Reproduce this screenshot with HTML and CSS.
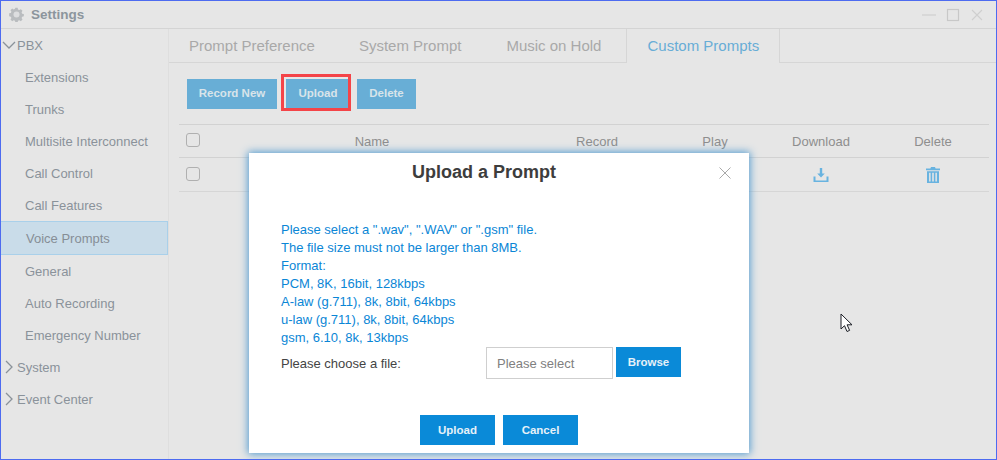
FILE: index.html
```html
<!DOCTYPE html>
<html lang="en">
<head>
  <meta charset="UTF-8" />
  <title>Settings</title>
  <link rel="stylesheet" href="styles.css">
</head>
<body>
  <div class="window">
    <header class="titlebar">
      <svg class="gear" width="15" height="15" viewBox="0 0 18 18">
        <path fill="#b9bcbf" d="M7.6 1h2.800l.4 2 1.600.7 1.800-1.100 2 2-1.100 1.800.7 1.600 2 .4v2.800l-2 .4-.7 1.600 1.100 1.800-2 2-1.800-1.100-1.600.7-.4 2H7.600l-.4-2-1.600-.7-1.800 1.100-2-2 1.100-1.800-.7-1.600-2-.4V7.600l2-.4.7-1.600-1.100-1.800 2-2 1.800 1.100 1.600-.7z"/>
        <circle cx="9" cy="9" r="3.600" fill="#dcdddf"/>
      </svg>
      <span class="app-title">Settings</span>
      <div class="win-controls">
        <svg width="16" height="16" viewBox="0 0 16 16"><path d="M1 8h14" stroke="#cfcfcf" stroke-width="1.200"/></svg>
        <svg width="16" height="16" viewBox="0 0 16 16"><rect x="2.500" y="2.500" width="11" height="11" fill="none" stroke="#c8c8c8" stroke-width="1.200"/></svg>
        <svg width="16" height="16" viewBox="0 0 16 16"><path d="M3 3l10 10M13 3L3 13" stroke="#cfcfcf" stroke-width="1.100"/></svg>
      </div>
    </header>

    <div class="main">
      <nav class="sidebar">
        <div class="nav-group">
          <svg class="chev" width="14" height="14" viewBox="0 0 14 14"><path d="M1 4l6 6 6-6" fill="none" stroke="#8a929a" stroke-width="1.300"/></svg>PBX
        </div>
        <a class="nav-item">Extensions</a>
        <a class="nav-item">Trunks</a>
        <a class="nav-item">Multisite Interconnect</a>
        <a class="nav-item">Call Control</a>
        <a class="nav-item">Call Features</a>
        <a class="nav-item active">Voice Prompts</a>
        <a class="nav-item">General</a>
        <a class="nav-item">Auto Recording</a>
        <a class="nav-item">Emergency Number</a>
        <div class="nav-group">
          <svg class="chev" width="14" height="14" viewBox="0 0 14 14"><path d="M4 1l6 6-6 6" fill="none" stroke="#8a929a" stroke-width="1.300"/></svg>System
        </div>
        <div class="nav-group">
          <svg class="chev" width="14" height="14" viewBox="0 0 14 14"><path d="M4 1l6 6-6 6" fill="none" stroke="#8a929a" stroke-width="1.300"/></svg>Event Center
        </div>
      </nav>

      <section class="content">
        <div class="tabs">
          <a class="tab">Prompt Preference</a>
          <a class="tab">System Prompt</a>
          <a class="tab">Music on Hold</a>
          <a class="tab current">Custom Prompts</a>
        </div>

        <div class="toolbar">
          <button class="btn-dim record">Record New</button>
          <span class="marked"><button class="btn-dim upload">Upload</button></span>
          <button class="btn-dim delete">Delete</button>
        </div>

        <div class="table">
          <div class="row head">
            <span class="check-cell"><i class="check"></i></span>
            <span>Name</span>
            <span>Record</span>
            <span>Play</span>
            <span>Download</span>
            <span>Delete</span>
          </div>
          <div class="row">
            <span class="check-cell"><i class="check"></i></span>
            <span></span>
            <span></span>
            <span></span>
            <span>
              <svg width="16" height="16" viewBox="0 0 16 16" fill="#68b3e0"><path d="M6.800 1h2.400v5.500h2.600L8 10.400 4.200 6.500h2.600z"/><path d="M.5 9.500h2v4h11v-4h2V15H.5z"/></svg>
            </span>
            <span>
              <svg width="14" height="16" viewBox="0 0 14 16" fill="#68b3e0"><path d="M5 0h4l.6 1.400H14v1.800H0V1.400h4.400z"/><path d="M1 4.200h12V16H1zm2.100 1.500v8.800h1.500V5.700zm3.100 0v8.800h1.600V5.700zm3.200 0v8.800h1.500V5.700z" fill-rule="evenodd"/></svg>
            </span>
          </div>
        </div>
      </section>
    </div>

    <div class="modal">
      <svg class="modal-close" width="12" height="12" viewBox="0 0 12 12"><path d="M.5.5l11 11M11.500.5l-11 11" stroke="#a9a9a9"/></svg>
      <h3>Upload a Prompt</h3>
      <div class="notes">
        <p>Please select a ".wav", ".WAV" or ".gsm" file.</p>
        <p>The file size must not be larger than 8MB.</p>
        <p>Format:</p>
        <p>PCM, 8K, 16bit, 128kbps</p>
        <p>A-law (g.711), 8k, 8bit, 64kbps</p>
        <p>u-law (g.711), 8k, 8bit, 64kbps</p>
        <p>gsm, 6.10, 8k, 13kbps</p>
      </div>
      <div class="file-row">
        <label>Please choose a file:</label>
        <div class="file-input">Please select</div>
        <button class="btn browse">Browse</button>
      </div>
      <div class="modal-actions">
        <button class="btn wide">Upload</button>
        <button class="btn wide">Cancel</button>
      </div>
    </div>

    <svg class="cursor" width="14" height="20" viewBox="0 0 14 20">
      <path d="M1 1v15l3.500-3.300 2.500 5.800 2.600-1.100-2.500-5.600H12z" fill="#fff" stroke="#1c1f26" stroke-width="1"/>
    </svg>
  </div>
</body>
</html>
```

FILE: styles.css
```css
* {
  box-sizing: border-box;
}
body {
  margin: 0;
  font-family: "Liberation Sans", Arial, sans-serif;
  background: #e6e6e6;
}
button {
  font-family: inherit;
  border: none;
  padding: 0;
  font-weight: bold;
  font-size: 11.5px;
}
.window {
  position: relative;
  width: 997px;
  height: 460px;
  border: 1px solid #4d6bf0;
  background: #e6e6e6;
  display: flex;
  flex-direction: column;
  overflow: hidden;
}

/* title bar */
.titlebar {
  height: 28px;
  flex: none;
  display: flex;
  align-items: center;
  padding: 0 11px 0 8px;
  border-bottom: 1px solid #d4d4d4;
}
.gear {
  margin-right: 7px;
}
.app-title {
  font-size: 13.5px;
  font-weight: bold;
  color: #8c959d;
}
.win-controls {
  margin-left: auto;
  display: flex;
  gap: 8px;
}

.main {
  flex: 1;
  display: flex;
  min-height: 0;
}

/* left menu */
.sidebar {
  width: 168px;
  flex: none;
  border-right: 1px solid #dedede;
}
.nav-group {
  height: 32px;
  display: flex;
  align-items: center;
  font-size: 13px;
  color: #8a929a;
  padding-left: 1px;
}
.chev {
  margin-right: 1px;
}
.nav-item {
  display: flex;
  align-items: center;
  height: 32px;
  padding-left: 24px;
  font-size: 13px;
  color: #8a929a;
}
.nav-item.active {
  height: 34px;
  background: #c9dce9;
  border: 1px solid #a9d0ea;
  border-left: none;
  padding-left: 25px;
  color: #868e96;
}

/* tabs + table */
.content {
  flex: 1;
  min-width: 0;
}
.tabs {
  height: 34px;
  display: flex;
  border-bottom: 1px solid #d6d6d6;
}
.tab {
  padding: 0 20px;
  font-size: 15px;
  line-height: 33px;
  color: #a9a9a9;
  margin-right: 5px;
}
.tab:first-child {
  margin-right: 4px;
}
.tab.current {
  color: #68add6;
  background: #e6e6e6;
  border-left: 1px solid #d6d6d6;
  border-right: 1px solid #d6d6d6;
  height: 34px;
}
.toolbar {
  display: flex;
  align-items: center;
  height: 61px;
  padding-left: 18px;
  gap: 9px;
}
.btn-dim {
  display: block;
  height: 30px;
  padding-bottom: 2px;
  background: #68aed6;
  color: #d8e4ea;
}
.record {
  width: 90px;
}
.upload {
  width: 64px;
}
.delete {
  width: 59px;
  margin-left: -2px;
}
.marked {
  position: relative;
  display: block;
}
/* red annotation drawn over the button */
.marked::after {
  content: "";
  box-sizing: border-box;
  position: absolute;
  left: -5px;
  top: -5px;
  width: 70px;
  height: 37px;
  border: 3px solid #f44448;
}
.table {
  margin-left: 10px;
  margin-right: 7px;
  border-top: 1px solid #d2d2d2;
}
.row {
  display: grid;
  grid-template-columns: 36px 314px 136px 100px 112px 112px;
  height: 34px;
  border-bottom: 1px solid #d6d6d6;
  font-size: 13px;
  color: #8e8e8e;
  align-items: center;
  text-align: center;
}
.row.head {
  height: 33px;
  border-bottom-color: #d2d2d2;
}
.row span {
  display: flex;
  justify-content: center;
  align-items: center;
}
.row .check-cell {
  justify-content: flex-start;
  padding-left: 7px;
  margin-top: -2px;
}
.check {
  display: block;
  width: 14px;
  height: 14px;
  border: 1.500px solid #b0b0b0;
  border-radius: 3px;
}

/* dialog */
.modal {
  position: absolute;
  left: 248px;
  top: 152px;
  width: 500px;
  height: 300px;
  background: #fff;
  box-shadow: 0 0 8px 1px #4f9ad0;
  padding: 0 32px;
}
.modal h3 {
  margin: 9px 30px 0 0;
  font-size: 18px;
  line-height: 21px;
  text-align: center;
  color: #3d3d3d;
}
.modal-close {
  position: absolute;
  right: 18px;
  top: 14px;
}
.notes {
  margin-top: 38px;
  font-size: 13px;
  line-height: 18px;
  color: #0a86d6;
}
.notes p {
  margin: 0;
}
.file-row {
  display: flex;
  align-items: flex-start;
  font-size: 13px;
  color: #444;
}
.file-row label {
  width: 205px;
  line-height: 34px;
}
.file-input {
  width: 127px;
  height: 32px;
  line-height: 32px;
  border: 1px solid #cfcfcf;
  padding-left: 10px;
  color: #808080;
  margin-right: 3px;
}
.btn {
  background: #0a8ad8;
  color: #e6f1f8;
}
.browse {
  width: 65px;
  height: 30px;
}
.modal-actions {
  display: flex;
  justify-content: center;
  gap: 8px;
  margin-top: 34px;
}
.wide {
  width: 75px;
  height: 30px;
}
.cursor {
  position: absolute;
  left: 839px;
  top: 312px;
}
```
